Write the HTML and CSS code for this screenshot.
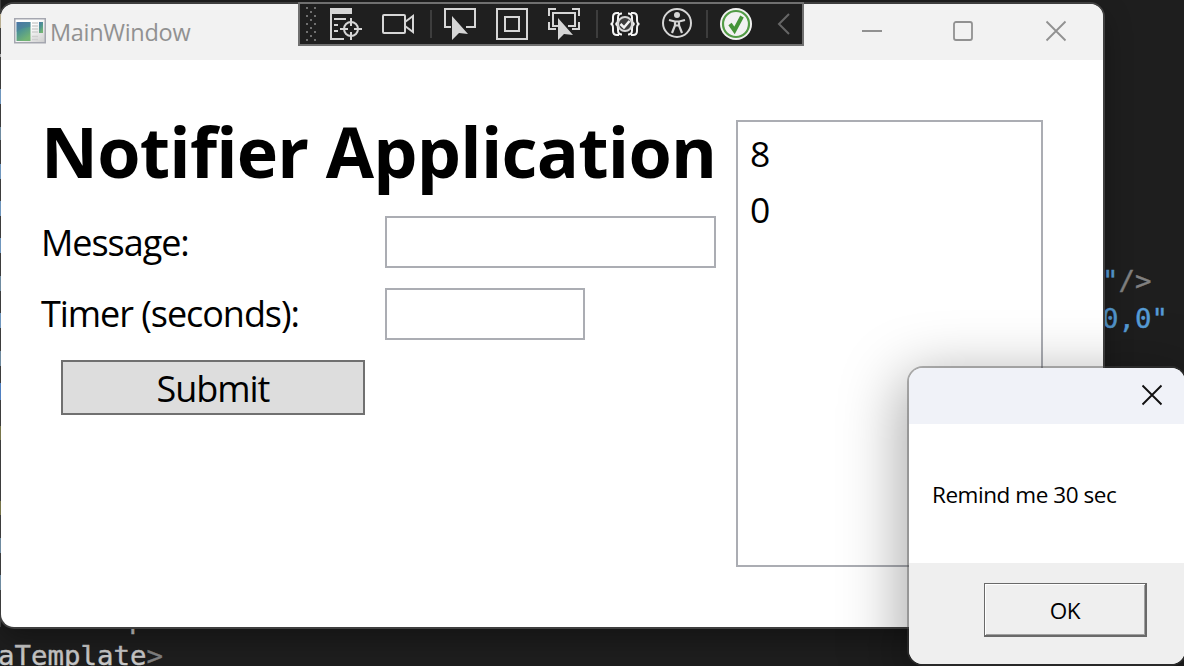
FILE: index.html
```html
<!DOCTYPE html>
<html lang="en">
<head>
<meta charset="utf-8">
<title>MainWindow</title>
<link rel="stylesheet" href="styles.css">
</head>
<body>
<div class="desktop">
  <div class="editor">
    <div class="code code-close"><span class="string">"</span><span class="punct">/&gt;</span></div>
    <div class="code code-margin"><span class="string">0,0"</span></div>
    <div class="code code-above">p</div>
    <div class="code code-template">aTemplate<span class="punct">&gt;</span></div>
  </div>

  <main class="window">
    <header class="titlebar">
      <svg class="app-icon" width="32" height="26" viewBox="0 0 32 26">
        <defs>
          <linearGradient id="pane" x1="0" y1="0" x2=".5" y2="1"><stop offset="0" stop-color="#4d78a8"/><stop offset=".5" stop-color="#4f9591"/><stop offset="1" stop-color="#73b474"/></linearGradient>
          <linearGradient id="sheet" x1="0" y1="0" x2="1" y2="1"><stop offset=".4" stop-color="#fff"/><stop offset="1" stop-color="#ccc"/></linearGradient>
        </defs>
        <rect x=".75" y=".75" width="30.5" height="24" fill="url(#sheet)" stroke="#a5a7b0" stroke-width="1.5"/>
        <rect x="2.5" y="4" width="14" height="19" fill="url(#pane)"/>
        <path d="M2.5 14Q8 9 16.500 9V4h-14z" fill="#4774a5" opacity=".35"/>
        <path d="M18 5h6M18 8h6M18 11h6M18 14h6M18 18.500h6M18 21.500h6" stroke="#cfcfcf" stroke-width="1.500"/>
        <rect x="25" y="4" width="4" height="11" fill="url(#pane)"/>
      </svg>
      <span class="window-title">MainWindow</span>
      <svg class="window-controls" width="206" height="22" viewBox="0 0 206 22" fill="none" stroke="#919191" stroke-width="1.8">
        <path d="M0 11h20"/>
        <rect x="92" y="2" width="18" height="18" rx="2"/>
        <path d="M184.500 1.500l19 19M203.500 1.500l-19 19"/>
      </svg>
    </header>
    <section class="content">
      <div class="form">
        <h1 class="heading">Notifier Application</h1>
        <label class="label" for="message">Message:</label>
        <input class="field" id="message" type="text">
        <label class="label label-timer" for="timer">Timer (seconds):</label>
        <input class="field field-short" id="timer" type="text">
        <button class="submit"><span class="submit-text">Submit</span></button>
      </div>
      <ul class="list"><li>8</li><li>0</li></ul>
    </section>
  </main>
  <div class="code-edge"></div>

  <nav class="debug-toolbar">
    <svg width="502" height="40" viewBox="300 4 502 40" fill="none" stroke="#d6d6d6" stroke-width="2">
      <g stroke="#707070" stroke-dasharray="2 6">
        <path d="M307 7v35M315 7v35"/><path d="M311 11v30"/>
      </g>
      <path d="M330 8h22v6h-22z" fill="#d6d6d6" stroke="none"/>
      <path d="M331 13v26h13M334 19h12M334 25h4M334 31h4"/>
      <circle cx="351" cy="29" r="7"/><path d="M351 18v8M351 32v8M340 29h8M354 29h8"/>
      <rect x="383" y="15" width="22" height="18" rx="1"/><path d="M405 22l8-6v16l-8-6"/>
      <path d="M431 10v28" stroke="#3d3d3d"/>
      <path d="M451 27h-6V9h30v18h-9"/><path d="M452 16l16 18-9-1-7 7z" fill="#d6d6d6" stroke="none"/>
      <rect x="497" y="9" width="30" height="30"/><rect x="505" y="17" width="14" height="14"/>
      <path d="M549 16V9h7M572 9h7v7M549 22v7h7M579 22v7h-7M558 26h-5V13h22v13h-7"/><path d="M558 18l15 17-9-1-6 6z" fill="#d6d6d6" stroke="none"/>
      <path d="M597 10v28M707 10v28" stroke="#3d3d3d"/>
      <g stroke="#f4f4f4">
        <path d="M619 13h-2q-4 0-4 4v3q0 4-2.500 4 2.500 0 2.500 4v3q0 4 4 4h2M631 13h2q4 0 4 4v3q0 4 2.500 4-2.500 0-2.500 4v3q0 4-4 4h-2"/>
        <path d="M622 13.500q-4 0-4 4v2q0 4-2.500 4.500 2.500 .5 2.500 4.500v2q0 4 4 4M628 13.500q4 0 4 4v2q0 4 2.500 4.500-2.500 .5-2.500 4.500v2q0 4-4 4"/>
        <circle cx="625" cy="24" r="7" fill="#3d3d3d" stroke="#d6d6d6"/><path d="M620.500 24l3.500 3.500 5.500-6.500" stroke-width="2.500"/>
      </g>
      <circle cx="677" cy="23" r="14"/><circle cx="677" cy="15" r="3" fill="#d6d6d6" stroke="none"/><path d="M669 20l6 1.500v4L672 33M685 20l-6 1.500v4L682 33M675 21.500h4v4h-4z" stroke-width="2.200"/>
      <circle cx="736" cy="24" r="16" fill="#f2f2f2" stroke="none"/><circle cx="736" cy="24" r="13" stroke="#529b45" stroke-width="2.200"/><path d="M730 24l4.500 6.500 7.500-14" stroke="#459438" stroke-width="4"/>
      <path d="M789 14l-10 10 10 10" stroke="#666"/>
    </svg>
  </nav>

  <aside class="dialog">
    <div class="dialog-titlebar">
      <svg width="22" height="22" viewBox="0 0 22 22" stroke="#111" stroke-width="1.900"><path d="M1.500 1.500l19 19M20.500 1.500l-19 19"/></svg>
    </div>
    <div class="dialog-message"><span class="dialog-text">Remind me 30 sec</span></div>
    <div class="dialog-footer"><button class="ok"><span class="ok-text">OK</span></button></div>
  </aside>
</div>
</body>
</html>
```
FILE: styles.css
```css
* { box-sizing: border-box; }
body { margin: 0; font-family: "Open Sans", "Noto Sans", sans-serif; color: #000; }
.desktop { position: relative; width: 1184px; height: 666px; overflow: hidden; background: #1e1e1e; }
.code { position: absolute; font: 27.4px/38px "DejaVu Sans Mono", monospace; color: #c8c8c8; white-space: pre; -webkit-text-stroke: .4px; }
.code-close { left: 1102px; top: 262px; }
.code-margin { left: 1102px; top: 300px; }
.code-above { left: 129px; top: 600px; }
.code-template { left: -2px; top: 637px; }
.string { color: #569cd6; }
.punct { color: #808080; }
/* Editor text showing through along the window's left side */
.code-edge {
  position: absolute; left: 0; top: 0; width: 1px; height: 627px;
  background: linear-gradient(#3d3d3d 14px, #b8ad90 14px 28px, #3d3d3d 28px 54px, #aaa 54px 57px, #3d3d3d 57px 89px,
    #6f96bd 89px 104px, #3d3d3d 104px 127px, #6f8ba0 127px 140px, #3d3d3d 140px 164px, #6f96bd 164px 179px,
    #3d3d3d 179px 201px, #6f96bd 201px 216px, #3d3d3d 216px 238px, #6f96bd 238px 253px, #3d3d3d 253px 276px,
    #6f8ba0 276px 291px, #3d3d3d 291px 313px, #6f96bd 313px 328px, #3d3d3d 328px 351px, #6f8ba0 351px 366px,
    #3d3d3d 366px 383px, #4f7fc0 383px 400px, #3d3d3d 400px 426px, #77754a 426px 440px, #3d3d3d 440px 501px,
    #77754a 501px 515px, #3d3d3d 515px 538px, #6f8ba0 538px 553px, #3d3d3d 553px 575px, #6f8ba0 575px 590px, #3d3d3d 590px);
}

.window { position: absolute; left: 1px; top: 4px; width: 1102px; height: 623px; border-radius: 13px; background: #fff; box-shadow: 0 0 0 2px #3f3f3f, 0 12px 28px rgba(0,0,0,.35); overflow: hidden; }
.titlebar { display: flex; align-items: center; height: 56px; padding: 0 35px 0 13px; background: #f2f2f2; }
.app-icon { margin-top: -2px; }
.window-title { margin-left: 4px; font-size: 23.5px; line-height: 32px; color: #919191; letter-spacing: -.3px; }
.window-controls { margin-left: auto; margin-top: -2px; }
.content { display: flex; align-items: flex-start; padding: 60px 60px 0 40px; }
.form { display: grid; grid-template-columns: 344px 331px; grid-template-rows: 96px 52px 20px 52px 20px 55px; width: 675px; }
.heading { grid-column: 1 / 3; margin: -17px 0 0; font-size: 70px; font-weight: 700; line-height: 96px; letter-spacing: -.78px; white-space: nowrap; }
.label { grid-column: 1; padding-top: 1px; font-size: 36px; line-height: 52px; letter-spacing: -1.05px; white-space: nowrap; }
.label-timer { grid-row: 4; padding-top: 0; }
.field { grid-column: 2; width: 331px; height: 52px; padding: 0 6px; border: 2px solid #abadb3; background: #fff; outline: none; }
.field-short { grid-row: 4; width: 200px; }
.submit { grid-column: 1; grid-row: 6; width: 304px; height: 55px; margin-left: 20px; padding: 2px 0 0; border: 2px solid #707070; background: #ddd; font: 36px/49px "Open Sans", sans-serif; letter-spacing: -1.05px; color: #000; }
.list { width: 307px; height: 447px; margin: 0 0 0 20px; padding: 3px 12px; border: 2px solid #abadb3; list-style: none; font-size: 35.5px; line-height: 56px; }

.debug-toolbar { position: absolute; left: 298px; top: 2px; width: 506px; height: 44px; border: 2px solid #707070; background: #1f1f1f; }
.debug-toolbar svg { display: block; }

.dialog { position: absolute; left: 909px; top: 368px; width: 276px; height: 296px; display: flex; flex-direction: column; border-radius: 14px; overflow: hidden; background: #fff; box-shadow: 0 0 0 2px rgba(70,70,70,.4), 0 16px 60px 8px rgba(0,0,0,.34); }
.dialog-titlebar { display: flex; align-items: center; justify-content: flex-end; height: 56px; padding: 0 22px 2px 0; background: #f0f2f8; }
.dialog-message { display: flex; align-items: center; height: 139px; padding: 3px 0 0 23px; font-size: 22.5px; line-height: 32px; letter-spacing: -.45px; white-space: nowrap; }
.dialog-footer { display: flex; justify-content: flex-end; flex: 1; padding: 20px 38px 0 0; background: #efefef; }
.ok { width: 163px; height: 54px; padding: 2px 0 0; border-style: solid; border-color: #696969; border-width: 1px 2px 2px 1px; background: #efefef; box-shadow: inset 1px 1px #fff, inset -1px -1px #a0a0a0; font: 22.5px/32px "Open Sans", sans-serif; letter-spacing: -.3px; color: #000; }
```
